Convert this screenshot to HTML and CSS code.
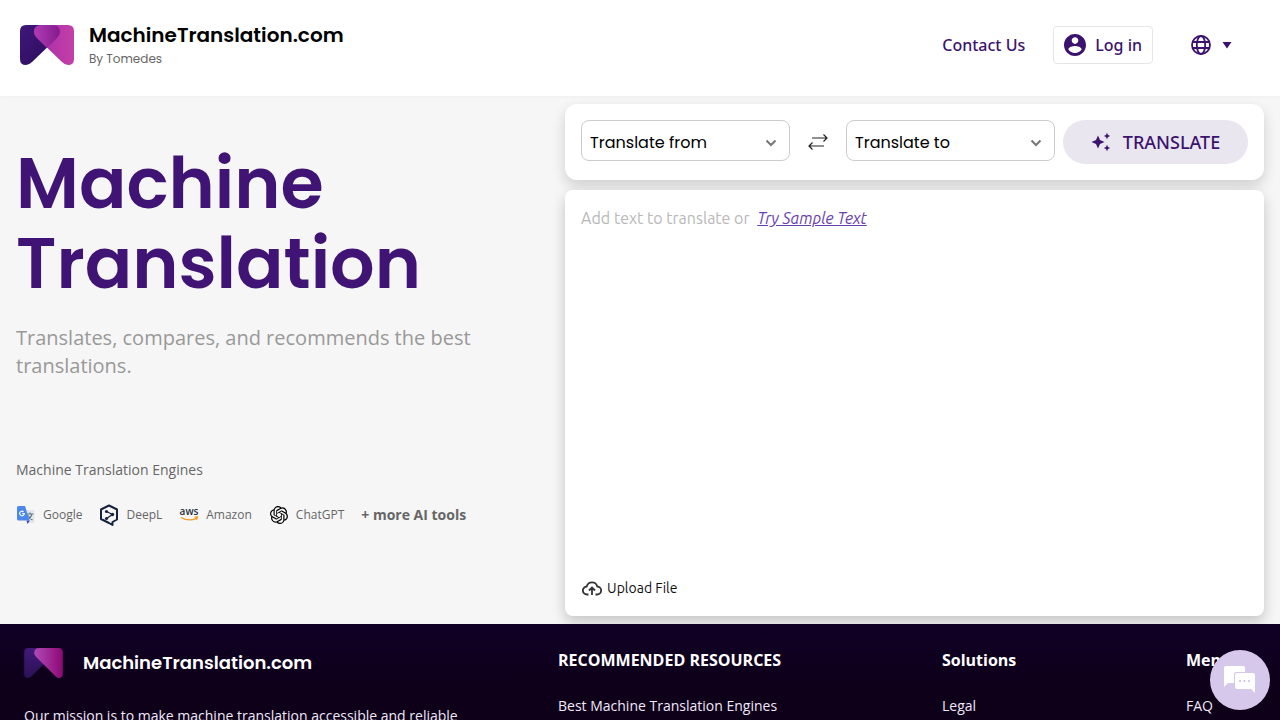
FILE: index.html
```html
<!DOCTYPE html>
<html lang="en">
<head>
<meta charset="utf-8">
<meta name="viewport" content="width=device-width, initial-scale=1">
<title>MachineTranslation.com</title>
<link rel="stylesheet" href="styles.css">
</head>
<body>
<header class="site-header">
  <a class="brand" href="#">
    <svg class="brand-logo" viewBox="0 0 54 40" aria-hidden="true">
      <defs>
        <linearGradient id="indigo" x1="0" y1="0" x2="1" y2="1"><stop offset="0" stop-color="#3f1779"/><stop offset="1" stop-color="#2b0c5c"/></linearGradient>
        <linearGradient id="pink" x1="0" y1="0" x2="1" y2="0"><stop offset="0" stop-color="#a52ca6"/><stop offset="1" stop-color="#c43fa9"/></linearGradient>
        <linearGradient id="overlap" x1="0" y1="0" x2="1" y2="0"><stop offset="0" stop-color="#b03bb4"/><stop offset="1" stop-color="#841b8e"/></linearGradient>
      </defs>
      <path fill="url(#indigo)" d="M6 0H32Q40 0 40 7Q40 10 37 13L12 37Q9 40 6 40Q0 40 0 34V6Q0 0 6 0Z"/>
      <path fill="url(#pink)" d="M48 0H22Q14 0 14 7Q14 10 17 13L42 37Q45 40 48 40Q54 40 54 34V6Q54 0 48 0Z"/>
      <path fill="url(#overlap)" d="M22 0H32Q40 0 40 7Q40 10 37 13L27 23L17 13Q14 10 14 7Q14 0 22 0Z"/>
    </svg>
    <span class="brand-text">
      <span class="brand-name">MachineTranslation.com</span>
      <span class="brand-by">By Tomedes</span>
    </span>
  </a>
  <nav class="header-nav">
    <a class="nav-link" href="#">Contact Us</a>
    <a class="login" href="#">
      <svg class="login-icon" viewBox="2 2 20 20" aria-hidden="true"><path fill="currentColor" d="M12 2C6.48 2 2 6.48 2 12s4.480 10 10 10 10-4.480 10-10S17.520 2 12 2zm0 3c1.660 0 3 1.340 3 3s-1.340 3-3 3-3-1.340-3-3 1.340-3 3-3zm0 14.200c-2.500 0-4.710-1.280-6-3.220.03-1.990 4-3.080 6-3.080 1.990 0 5.970 1.090 6 3.080-1.290 1.940-3.500 3.220-6 3.220z"/></svg>
      Log in
    </a>
    <button class="language" type="button" aria-label="Choose language">
      <svg class="globe" viewBox="0 0 20 20" fill="none" stroke="currentColor" stroke-width="1.800" aria-hidden="true"><circle cx="10" cy="10" r="9"/><ellipse cx="10" cy="10" rx="4.200" ry="9"/><path d="M1.500 7h17M1.500 13h17"/></svg>
      <svg class="caret" viewBox="0 0 10 8" aria-hidden="true"><path fill="currentColor" d="M.5 1h9L5 7.500z"/></svg>
    </button>
  </nav>
</header>

<main class="main">
  <section class="intro">
    <h1 class="title">Machine Translation</h1>
    <p class="subtitle">Translates, compares, and recommends the best translations.</p>
    <h2 class="engines-title">Machine Translation Engines</h2>
    <ul class="engines">
      <li class="engine">
        <svg class="engine-icon" viewBox="0 0 20 20" aria-hidden="true">
          <path fill="#e3e7ea" d="M8 5h9q1.500 0 1.500 1.500V18H11z"/>
          <path fill="none" stroke="#607988" stroke-width="1.200" d="M10.500 9h7M14 7.500V9M16 9q-1 4-4.500 6M12 10.500q1.500 3 4.500 4.500"/>
          <path fill="#3a49a5" d="M10.500 15.500H14L11.500 19z"/>
          <path fill="#4c87ee" d="M2.500 1H9l4.500 14.500h-11Q1 15.500 1 14V2.500Q1 1 2.500 1z"/>
          <path fill="none" stroke="#fff" stroke-width="1.100" d="M7.600 6.800A2.300 2.300 0 1 0 8.300 8.500H6.200"/>
        </svg>Google
      </li>
      <li class="engine">
        <svg class="engine-icon" viewBox="0 0 20 22" aria-hidden="true">
          <path fill="none" stroke="#15233f" stroke-width="2" stroke-linejoin="round" d="M10 1.500L18 5.500V15.500L13.500 18V21L10 19 2 15V5.500z"/>
          <path fill="none" stroke="#15233f" stroke-width="1.300" d="M7.500 7.500l6 3-6 4"/>
          <g fill="#15233f"><circle cx="7.500" cy="7.500" r="1.600"/><circle cx="13.500" cy="10.500" r="1.700"/><circle cx="7.500" cy="14.500" r="1.600"/></g>
        </svg>DeepL
      </li>
      <li class="engine">
        <svg class="engine-icon" viewBox="0 0 20 20" aria-hidden="true">
          <text class="aws-word" x="10" y="10" text-anchor="middle">aws</text>
          <path fill="none" stroke="#f39a1f" stroke-width="1.300" d="M2 12.500q8 4.500 15.500.8M15.500 12.200l3-.2-1 2.800"/>
        </svg>Amazon
      </li>
      <li class="engine">
        <svg class="engine-icon engine-icon-small" viewBox="0 0 24 24" aria-hidden="true"><path d="M22.282 9.821a5.985 5.985 0 0 0-.516-4.911 6.046 6.046 0 0 0-6.510-2.900A6.065 6.065 0 0 0 4.981 4.182a5.985 5.985 0 0 0-3.998 2.900 6.046 6.046 0 0 0 .743 7.097 5.980 5.980 0 0 0 .511 4.911 6.051 6.051 0 0 0 6.515 2.900A5.985 5.985 0 0 0 13.260 24a6.056 6.056 0 0 0 5.772-4.206 5.989 5.989 0 0 0 3.998-2.900 6.056 6.056 0 0 0-.748-7.073zm-9.022 12.608a4.476 4.476 0 0 1-2.876-1.041l.142-.080 4.778-2.758a.795.795 0 0 0 .393-.681v-6.737l2.020 1.169a.071.071 0 0 1 .038.052v5.583a4.504 4.504 0 0 1-4.495 4.494zm-9.661-4.125a4.471 4.471 0 0 1-.535-3.014l.142.085 4.783 2.758a.771.771 0 0 0 .781 0l5.843-3.369v2.332a.080.080 0 0 1-.033.062L9.740 19.950a4.499 4.499 0 0 1-6.141-1.646zM2.341 7.896a4.485 4.485 0 0 1 2.366-1.973V11.600a.766.766 0 0 0 .388.677l5.814 3.354-2.020 1.169a.076.076 0 0 1-.071 0l-4.830-2.787A4.504 4.504 0 0 1 2.341 7.872zm16.596 3.856L13.104 8.364 15.119 7.200a.076.076 0 0 1 .071 0l4.830 2.791a4.494 4.494 0 0 1-.677 8.104v-5.677a.790.790 0 0 0-.407-.667zm2.011-3.023l-.142-.085-4.774-2.782a.776.776 0 0 0-.785 0L9.409 9.230V6.897a.066.066 0 0 1 .028-.062l4.830-2.787a4.499 4.499 0 0 1 6.680 4.660zM8.307 12.863l-2.020-1.164a.080.080 0 0 1-.038-.057V6.074a4.499 4.499 0 0 1 7.376-3.454l-.142.081L8.704 5.459a.795.795 0 0 0-.393.681zm1.098-2.365l2.602-1.500 2.607 1.500v2.999l-2.597 1.500-2.607-1.500Z"/></svg>ChatGPT
      </li>
      <li class="engine engine-more">+ more AI tools</li>
    </ul>
  </section>

  <section class="translator">
    <div class="toolbar">
      <div class="picker">
        <select class="picker-select" aria-label="Source language"><option>Translate from</option></select>
        <svg class="chevron" viewBox="0 0 12 8" aria-hidden="true"><path d="M1.500 1.500L6 6l4.500-4.500"/></svg>
      </div>
      <button class="swap" type="button" aria-label="Swap languages">
        <svg class="swap-icon" viewBox="0 0 20 18" aria-hidden="true"><path d="M4 5h15M15.500 1.500L19 5l-3.500 3.500M16 13H1M4.500 9.500L1 13l3.500 3.500"/></svg>
      </button>
      <div class="picker">
        <select class="picker-select" aria-label="Target language"><option>Translate to</option></select>
        <svg class="chevron" viewBox="0 0 12 8" aria-hidden="true"><path d="M1.500 1.500L6 6l4.500-4.500"/></svg>
      </div>
      <button class="translate" type="button">
        <svg class="sparkles" viewBox="0 0 20 20" aria-hidden="true"><path fill="currentColor" d="M7 3.500l2 4.500 4.500 2-4.500 2-2 4.500-2-4.500L.5 10 5 8zM16 .8l1 2.200 2.200 1L17 5l-1 2.200L15 5l-2.200-1L15 3zM16 12.800l1 2.200 2.200 1-2.200 1-1 2.200-1-2.200-2.200-1 2.200-1z"/></svg>
        TRANSLATE
      </button>
    </div>
    <div class="editor">
      <textarea class="editor-input" aria-label="Text to translate"></textarea>
      <p class="editor-hint">Add text to translate or <a class="sample" href="#">Try Sample Text</a></p>
      <button class="upload" type="button">
        <svg class="upload-icon" viewBox="0 0 20 16" aria-hidden="true"><path d="M6.500 14.500H5a4 4 0 0 1-.3-8A5.500 5.500 0 0 1 15.300 6.500 4 4 0 0 1 15 14.500H13.500M10 15V8M7 10.500l3-3 3 3"/></svg>
        Upload File
      </button>
    </div>
  </section>
</main>

<footer class="site-footer">
  <div class="footer-about">
    <a class="footer-brand" href="#">
      <svg class="footer-logo" viewBox="0 0 54 42" aria-hidden="true">
        <defs>
          <linearGradient id="violet" x1="0" y1="0" x2="0" y2="1"><stop offset="0" stop-color="#421a78"/><stop offset="1" stop-color="#2b1058"/></linearGradient>
          <linearGradient id="magenta" x1="0" y1="0" x2="1" y2="0"><stop offset="0" stop-color="#b04ab7"/><stop offset="1" stop-color="#8d0874"/></linearGradient>
        </defs>
        <path fill="url(#violet)" d="M6 0H32Q40 0 40 7Q40 10 37 13L10 40Q8 42 5 42Q0 42 0 36V6Q0 0 6 0Z"/>
        <path fill="url(#magenta)" d="M48 0H22Q14 0 14 7Q14 10 17 13L43 39Q45 42 48 42Q54 42 54 36V6Q54 0 48 0Z"/>
      </svg>
      MachineTranslation.com
    </a>
    <p class="mission">Our mission is to make machine translation accessible and reliable</p>
  </div>
  <nav class="footer-column" aria-labelledby="resources">
    <h3 class="footer-heading" id="resources">RECOMMENDED RESOURCES</h3>
    <a class="footer-link" href="#">Best Machine Translation Engines</a>
  </nav>
  <nav class="footer-column" aria-labelledby="solutions">
    <h3 class="footer-heading" id="solutions">Solutions</h3>
    <a class="footer-link" href="#">Legal</a>
  </nav>
  <nav class="footer-column" aria-labelledby="menu">
    <h3 class="footer-heading" id="menu">Menu</h3>
    <a class="footer-link" href="#">FAQ</a>
  </nav>
</footer>

<button class="chat" type="button" aria-label="Open chat">
  <svg class="chat-icon" viewBox="0 0 32 28" aria-hidden="true">
    <path fill="#fff" d="M2 0h17q2 0 2 2v4h-9q-2 0-2 2v9H4l-4 4V2Q0 0 2 0z"/>
    <path fill="#fff" d="M13 7h15q3 0 3 2v18l-4-4H13q-2 0-2-2V9q0-2 2-2z"/>
    <g fill="#c9b7e4"><circle cx="16" cy="15" r="1"/><circle cx="20.500" cy="15" r="1"/><circle cx="25" cy="15" r="1"/></g>
  </svg>
</button>
</body>
</html>
```
FILE: styles.css
```css
:root {
  --indigo: #3b136f;
  --display: Poppins, Inter, sans-serif;
  --body: "Open Sans", "Noto Sans", sans-serif;
  --ui: "Noto Sans", "Open Sans", sans-serif;
  --editor: Ubuntu, "Noto Sans", sans-serif;
}

* { box-sizing: border-box; }

body {
  display: flex;
  flex-direction: column;
  height: 100vh;
  margin: 0;
  overflow: hidden;
  background: #f6f6f6;
  font-family: var(--body);
}

a { color: inherit; text-decoration: none; }
button { border: 0; padding: 0; background: none; color: inherit; cursor: pointer; }
h1, h2, h3, p, ul { margin: 0; padding: 0; }
svg { display: block; flex: none; }

/* Header */
.site-header {
  display: flex;
  align-items: center;
  justify-content: space-between;
  flex: none;
  padding: 20px 48px 26px 20px;
  background: #fff;
  box-shadow: 0 1px 4px rgba(0, 0, 0, 0.03);
}
.brand { display: flex; align-items: center; gap: 15px; }
.brand-logo { width: 54px; height: 40px; }
.brand-text { display: flex; flex-direction: column; padding-bottom: 2px; }
.brand-name { color: #000; font: 600 20px/30px var(--display); }
.brand-by { color: #666; font: 400 12px/18px var(--display); }
.header-nav {
  display: flex;
  align-items: center;
  color: var(--indigo);
  font: 500 16px/24px var(--ui);
}
.login {
  display: flex;
  align-items: center;
  gap: 9px;
  margin: 0 38px 0 28px;
  padding: 6px 10px;
  border: 1px solid #e6e6ea;
  border-radius: 4px;
}
.login-icon { width: 22px; height: 22px; }
.language { display: flex; align-items: center; gap: 11px; }
.globe { width: 20px; height: 20px; }
.caret { width: 10px; height: 8px; }

/* Main */
.main {
  display: grid;
  grid-template-columns: 44fr 56fr;
  flex: 1 0 auto;
  padding: 8px 16px;
}
.intro { padding-top: 40px; }
.title {
  max-width: 480px;
  color: #3f1474;
  font: 600 70px/80px var(--display);
}
.subtitle {
  max-width: 500px;
  margin-top: 20px;
  color: #999;
  font-size: 20px;
  line-height: 28px;
}
.engines-title {
  margin-top: 80px;
  color: #666;
  font-size: 14px;
  font-weight: 400;
  line-height: 20px;
}
.engines {
  display: flex;
  align-items: center;
  gap: 17px;
  margin-top: 24px;
  color: #666;
  font-size: 12px;
  line-height: 20px;
  list-style: none;
}
.engine { display: flex; align-items: center; gap: 7px; }
.engine-icon { width: 20px; height: 22px; }
.engine-icon-small { width: 18px; margin: 0 1px; }
.engine-more { font-size: 14px; font-weight: 700; }
.aws-word { fill: #252f3e; font: 600 10px "Open Sans", sans-serif; }

/* Translator */
.translator { display: flex; flex-direction: column; gap: 10px; }
.toolbar {
  display: flex;
  align-items: flex-start;
  padding: 16px;
  border-radius: 12px;
  background: #fff;
  box-shadow: 0 6px 14px rgba(0, 0, 0, 0.16);
}
.picker { display: grid; flex: 1; align-items: center; }
.picker-select {
  grid-area: 1 / 1;
  width: 100%;
  height: 41px;
  padding: 4px 32px 0 8px;
  border: 1px solid #ccc;
  border-radius: 8px;
  appearance: none;
  background: #fff;
  color: #000;
  font: 400 16px/24px var(--display);
}
.chevron {
  grid-area: 1 / 1;
  justify-self: end;
  width: 12px;
  height: 8px;
  margin: 4px 13px 0 0;
  fill: none;
  stroke: #777;
  stroke-width: 2;
  pointer-events: none;
}
.swap { padding: 13px 18px; }
.swap-icon { width: 20px; height: 18px; fill: none; stroke: #222; stroke-width: 1.2; }
.translate {
  display: flex;
  align-items: center;
  justify-content: center;
  gap: 12px;
  width: 185px;
  height: 44px;
  margin-left: 8px;
  border-radius: 22px;
  background: #eae6f0;
  color: var(--indigo);
  font: 500 18px/24px var(--ui);
}
.sparkles { width: 20px; height: 20px; }
.editor {
  position: relative;
  display: flex;
  flex: 1;
  min-height: 426px;
  border-radius: 8px;
  background: #fff;
  box-shadow: 0 6px 14px rgba(0, 0, 0, 0.2);
}
.editor-input {
  flex: 1;
  padding: 16px 16px 48px;
  border: 0;
  border-radius: 8px;
  outline: 0;
  resize: none;
  background: transparent;
  font: 400 16px/24px var(--editor);
}
.editor-hint {
  position: absolute;
  top: 16px;
  left: 16px;
  color: #b8b8b8;
  font: 400 16px/24px var(--editor);
}
.sample {
  margin-left: 4px;
  color: #6a3fad;
  font-style: italic;
  text-decoration: underline;
}
.upload {
  position: absolute;
  bottom: 16px;
  left: 17px;
  display: flex;
  align-items: center;
  gap: 5px;
  color: #111;
  font: 400 14px/24px var(--editor);
}
.upload-icon { width: 20px; height: 16px; fill: none; stroke: #333; stroke-width: 1.8; }

/* Footer */
.site-footer {
  display: grid;
  grid-template-columns: 534fr 384fr 244fr 70fr;
  flex: none;
  padding: 24px 24px 0;
  background: linear-gradient(#110026, #0d0018 70%);
  color: #f0e8fa;
}
.footer-brand {
  display: flex;
  align-items: center;
  gap: 20px;
  color: #fff;
  font: 600 18px/30px var(--display);
}
.footer-logo { width: 39px; height: 30px; }
.mission { margin-top: 28px; font-size: 14px; line-height: 20px; }
.footer-heading { color: #fff; font-size: 16px; font-weight: 700; line-height: 24px; }
.footer-link { display: block; margin-top: 24px; font-size: 14px; line-height: 20px; }

/* Chat launcher */
.chat {
  position: fixed;
  right: 10px;
  bottom: 10px;
  display: grid;
  place-items: center;
  width: 60px;
  height: 60px;
  border-radius: 50%;
  background: #d6c8ea;
}
.chat-icon { width: 32px; height: 28px; }
```
